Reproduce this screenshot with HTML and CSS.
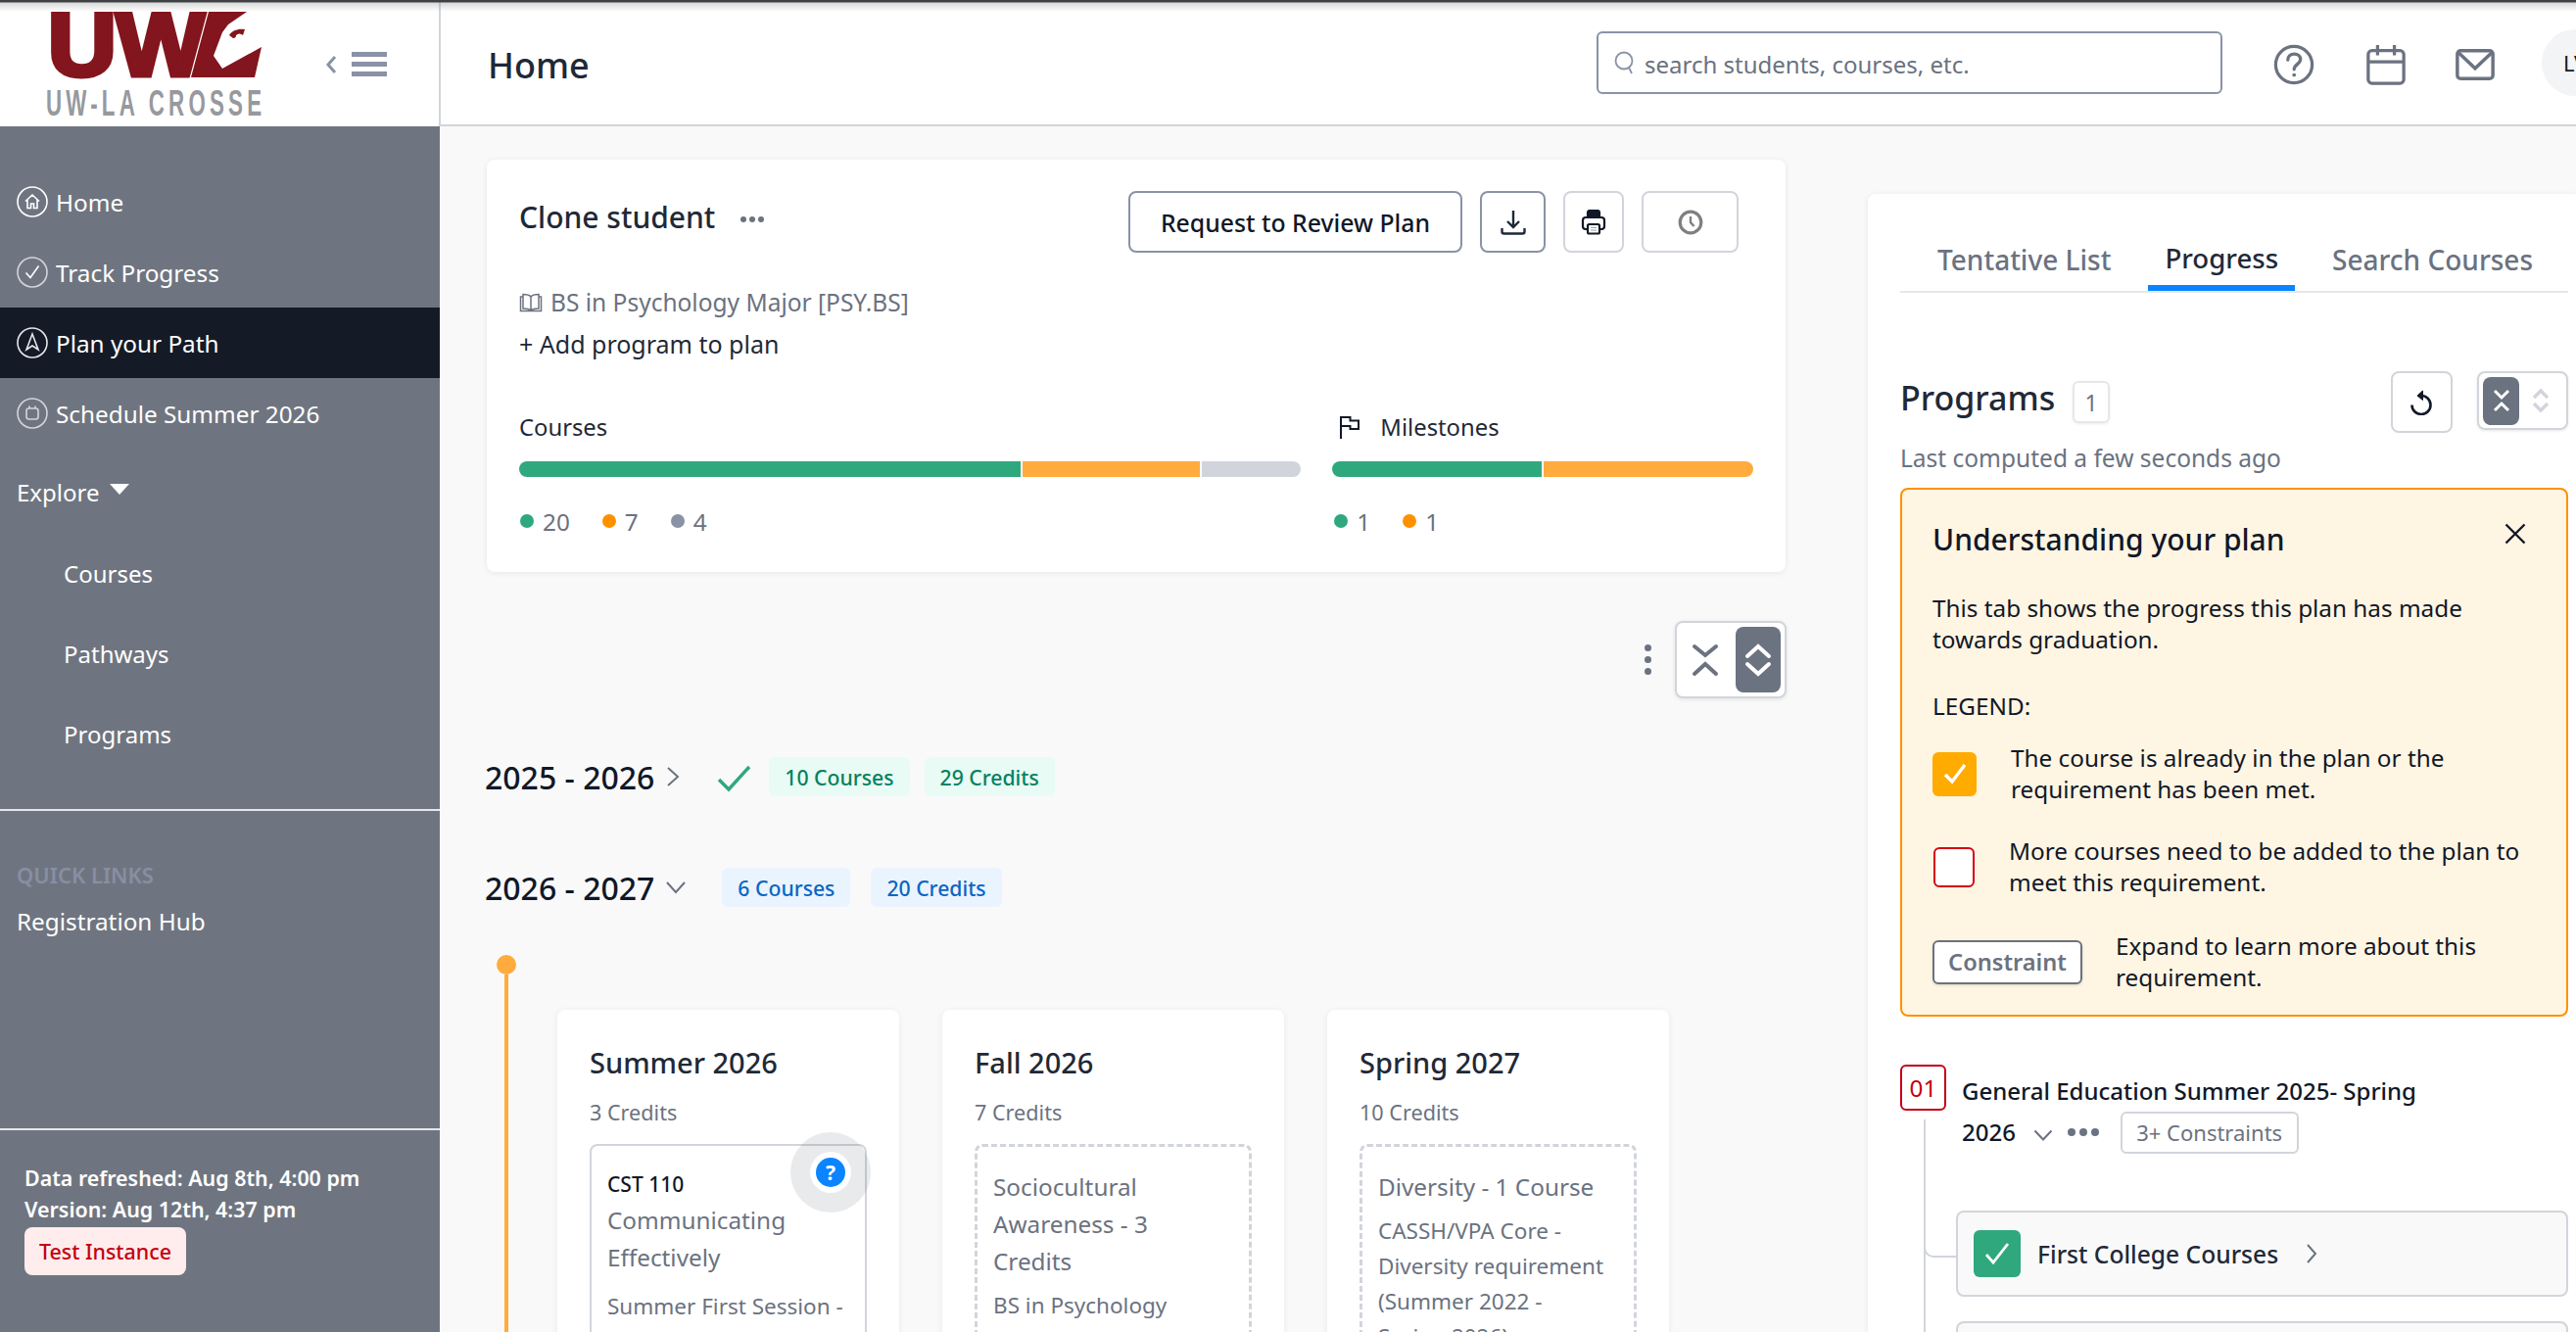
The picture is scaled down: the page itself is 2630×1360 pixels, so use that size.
FILE: index.html
```html
<!DOCTYPE html>
<html lang="en">
<head>
<meta charset="UTF-8">
<title>Home</title>
<link rel="stylesheet" href="styles.css">
</head>
<body>
  <div class="topline"></div>
  <div class="app">
    <div class="brand">
      <svg class="logo" viewBox="0 0 224 112" width="224" height="112">
        <text class="logo-uw" x="2" y="66" textLength="161" lengthAdjust="spacingAndGlyphs">UW</text>
        <polygon class="logo-red" points="166,1 205,1 186,14 180,22 171,46 180,59 220,37 213,68 148,68"/>
        <path class="logo-eye" d="M187 25c3-5 9-7 16-6l-2 6c-3-2-5-2-7 0 0 2-1 3-3 3z"/>
        <text class="logo-sub" x="0" y="107" transform="scale(0.62 1)" textLength="355" lengthAdjust="spacing">UW-LA CROSSE</text>
      </svg>
      <div class="burger">
        <svg width="12" height="18" viewBox="0 0 12 18"><path d="M10 1 3 9l7 8" fill="none" stroke="#8a92a6" stroke-width="3"/></svg>
        <div class="burger-lines"><span></span><span></span><span></span></div>
      </div>
    </div>

    <header class="topbar">
      <h1>Home</h1>
      <div class="search">
        <svg width="22" height="26" viewBox="0 0 22 26" fill="none" stroke="#8a92a6" stroke-width="1.800"><circle cx="10" cy="11" r="8.500"/><path d="m15 18 3 6"/></svg>
        <span>search students, courses, etc.</span>
      </div>
      <svg class="top-icon icon-help" viewBox="0 0 44 44" fill="none" stroke="#6b7280" stroke-width="3.400"><circle cx="22" cy="22" r="19.500"/><path d="M15.500 17c0-4 3-6.500 6.800-6.500s6.700 2.400 6.700 5.800c0 5.200-6.800 5.400-6.800 10.700" stroke-linecap="round"/><circle cx="22.200" cy="33" r="1.200" fill="#6b7280" stroke-width="1.500"/></svg>
      <svg class="top-icon icon-cal" viewBox="0 0 44 44" fill="none" stroke="#6b7280" stroke-width="3.400"><rect x="3" y="7" width="38" height="35" rx="4"/><path d="M3 19h38M13 1v11M31 1v11"/></svg>
      <svg class="top-icon icon-mail" viewBox="0 0 44 44" fill="none" stroke="#6b7280" stroke-width="3.600"><rect x="3" y="7" width="38" height="30" rx="3.500"/><path d="m4 9 18 17L40 9"/></svg>
      <div class="avatar">LV</div>
    </header>

    <aside class="sidebar">
      <nav class="main-nav">
        <a class="nav-row" href="#"><svg viewBox="0 0 32 32" fill="none" stroke="#fff" stroke-width="1.600"><circle cx="16" cy="16" r="15"/><path d="m9 15.500 7-6.500 7 6.500M11 14v8.500h3.500V18h3v4.500H21V14"/></svg>Home</a>
        <a class="nav-row" href="#"><svg viewBox="0 0 32 32" fill="none" stroke="#d1d5db" stroke-width="1.600"><circle cx="16" cy="16" r="15"/><path d="m9.500 16.500 4.500 5 8.500-12" stroke="#fff"/></svg>Track Progress</a>
        <a class="nav-row active" href="#"><svg viewBox="0 0 32 32" fill="none" stroke="#e5e7eb" stroke-width="1.600"><circle cx="16" cy="16" r="15"/><path d="m16 7 6 16-6-4-6 4z"/></svg>Plan your Path</a>
        <a class="nav-row" href="#"><svg viewBox="0 0 32 32" fill="none" stroke="#d1d5db" stroke-width="1.600"><circle cx="16" cy="16" r="15"/><rect x="10" y="11" width="12" height="11" rx="2.500"/><path d="M13 8.500V11M19 8.500V11"/></svg>Schedule Summer 2026</a>
      </nav>
      <div class="explore">Explore<span class="caret"></span></div>
      <a class="sub-row" href="#">Courses</a>
      <a class="sub-row" href="#">Pathways</a>
      <a class="sub-row" href="#">Programs</a>
      <div class="side-links">
        <div class="quick-title">QUICK LINKS</div>
        <a class="quick-link" href="#">Registration Hub</a>
      </div>
      <div class="side-foot">
        <p>Data refreshed: Aug 8th, 4:00 pm</p>
        <p>Version: Aug 12th, 4:37 pm</p>
        <span class="test-tag">Test Instance</span>
      </div>
    </aside>

    <main class="content">
      <div class="left-col">
        <section class="plan-card">
          <div class="plan-head">
            <div class="plan-title">Clone student <span class="more"><i></i><i></i><i></i></span></div>
            <div class="plan-actions">
              <button class="btn btn-strong">Request to Review Plan</button>
              <button class="btn btn-strong btn-dl"><svg width="26" height="26" viewBox="0 0 26 26" fill="none" stroke="#1f2937" stroke-width="2.400"><path d="M13 1v17M7 12l6 6 6-6M1.500 19v3.500a2 2 0 0 0 2 2h19a2 2 0 0 0 2-2V19"/></svg></button>
              <button class="btn btn-print"><svg width="26" height="26" viewBox="0 0 26 26" fill="none" stroke="#111827" stroke-width="2.200"><path d="M7 8V3a2 2 0 0 1 2-2h8a2 2 0 0 1 2 2v5z" fill="#111827"/><rect x="2" y="8" width="22" height="12" rx="3"/><rect x="7" y="15" width="12" height="9.500" rx="1.500" fill="#fff"/><path d="M10 18.500h6M10 21h6" stroke="#9ca3af" stroke-width="1.100"/></svg></button>
              <button class="btn btn-clock"><svg width="26" height="26" viewBox="0 0 26 26" fill="none" stroke="#7f7f7f" stroke-width="3.200"><circle cx="13" cy="13" r="10.800"/><path d="M13 7v6l3.500 4" stroke-width="2.400"/></svg></button>
            </div>
          </div>
          <div class="plan-program"><svg width="24" height="20" viewBox="0 0 24 20" fill="none" stroke="#6b7280" stroke-width="1.500"><path d="M12 4c-1.500-2-4-2.500-8-2.500V16c4 0 6.500.5 8 2 1.500-1.500 4-2 8-2V1.500c-4 0-6.500.5-8 2.500zm0 0v14M4 4H1.500v14.500H12h10.500V4H20"/></svg>BS in Psychology Major [PSY.BS]</div>
          <div class="plan-add">+ Add program to plan</div>
          <div class="plan-stats">
            <div class="stat stat-courses">
              <div class="stat-label">Courses</div>
              <div class="bar">
                <span class="seg seg-green bar-c1"></span><span class="seg seg-orange bar-c2"></span><span class="seg seg-grey bar-c3"></span>
              </div>
              <div class="legend">
                <span class="legend-item"><i class="dot dot-green"></i>20</span>
                <span class="legend-item"><i class="dot dot-orange"></i>7</span>
                <span class="legend-item"><i class="dot dot-grey"></i>4</span>
              </div>
            </div>
            <div class="stat stat-miles">
              <div class="stat-label"><svg width="22" height="24" viewBox="0 0 22 24" fill="none" stroke="#111827" stroke-width="2"><path d="M2 24V2h9.500v3.500H20V14h-8.500v-3H2"/></svg>Milestones</div>
              <div class="bar">
                <span class="seg seg-green bar-m1"></span><span class="seg seg-orange bar-m2"></span>
              </div>
              <div class="legend">
                <span class="legend-item"><i class="dot dot-green"></i>1</span>
                <span class="legend-item"><i class="dot dot-orange"></i>1</span>
              </div>
            </div>
          </div>
        </section>

        <div class="view-row">
          <span class="kebab"><i></i><i></i><i></i></span>
          <div class="view-toggle">
            <span class="vt-cell vt-off"><svg width="30" height="38" viewBox="0 0 30 38" fill="none" stroke="#6b7280" stroke-width="4" stroke-linecap="round"><path d="m4 5 11 9 11-9M4 33l11-10 11 10"/></svg></span>
            <span class="vt-cell vt-on"><svg width="30" height="38" viewBox="0 0 30 38" fill="none" stroke="#fff" stroke-width="4" stroke-linecap="round"><path d="m4 15 11-10 11 10M4 23l11 10 11-10"/></svg></span>
          </div>
        </div>

        <div class="year-row">
          <span class="year-name">2025 - 2026</span>
          <svg class="year-chev" width="14" height="24" viewBox="0 0 14 24" fill="none" stroke="#6b7280" stroke-width="2"><path d="m2 3 10 9-10 9"/></svg>
          <svg class="year-check" width="36" height="28" viewBox="0 0 36 28" fill="none" stroke="#2fa87e" stroke-width="3.400"><path d="m2 15 10 10L33 2"/></svg>
          <span class="pill pill-green">10 Courses</span>
          <span class="pill pill-green">29 Credits</span>
        </div>

        <div class="year-row year-open">
          <span class="year-name">2026 - 2027</span>
          <svg class="year-chev" width="22" height="14" viewBox="0 0 22 14" fill="none" stroke="#6b7280" stroke-width="2"><path d="m2 2 9 10 9-10"/></svg>
          <span class="pill pill-blue">6 Courses</span>
          <span class="pill pill-blue">20 Credits</span>
        </div>

        <div class="timeline">
          <div class="time-rail"><span class="time-dot"></span><span class="time-line"></span></div>
          <div class="terms">
            <article class="term">
              <h3>Summer 2026</h3>
              <div class="term-credits">3 Credits</div>
              <div class="course course-filled">
                <span class="course-alert"><b>?</b></span>
                <div class="course-code">CST 110</div>
                <div class="course-name">Communicating Effectively</div>
                <div class="course-note">Summer First Session - 2026</div>
              </div>
            </article>
            <article class="term">
              <h3>Fall 2026</h3>
              <div class="term-credits">7 Credits</div>
              <div class="course course-empty">
                <div class="course-name">Sociocultural<br>Awareness - 3<br>Credits</div>
                <div class="course-note">BS in Psychology<br>Major [PSY.BS]</div>
              </div>
            </article>
            <article class="term">
              <h3>Spring 2027</h3>
              <div class="term-credits">10 Credits</div>
              <div class="course course-empty">
                <div class="course-name">Diversity - 1 Course</div>
                <div class="course-note">CASSH/VPA Core -<br>Diversity requirement<br>(Summer 2022 -<br>Spring 2026)</div>
              </div>
            </article>
          </div>
        </div>
      </div>

      <section class="right-panel">
        <div class="tabs">
          <span class="tab">Tentative List</span>
          <span class="tab tab-on">Progress</span>
          <span class="tab">Search Courses</span>
        </div>
        <div class="programs-head">
          <h2>Programs</h2>
          <span class="count">1</span>
          <button class="btn btn-undo"><svg width="24" height="26" viewBox="0 0 24 26" fill="none" stroke="#111827" stroke-width="2.600"><path d="M11 6a9.500 9.500 0 1 1-9.500 9.500"/><path d="M12.500 1 7 6l5.500 4.500z" fill="#111827" stroke-width="1"/></svg></button>
          <div class="mini-toggle">
            <span class="mt-on"><svg width="20" height="26" viewBox="0 0 20 26" fill="none" stroke="#fff" stroke-width="3"><path d="m3 3 7 7 7-7M3 23l7-7 7 7"/></svg></span>
            <span class="mt-off"><svg width="20" height="26" viewBox="0 0 20 26" fill="none" stroke="#d1d5db" stroke-width="3.400"><path d="m3 10 7-7 7 7M3 16l7 7 7-7"/></svg></span>
          </div>
        </div>
        <div class="computed">Last computed a few seconds ago</div>

        <div class="callout">
          <div class="callout-head">
            <h4>Understanding your plan</h4>
            <svg class="callout-x" width="22" height="22" viewBox="0 0 22 22" fill="none" stroke="#111827" stroke-width="2.400"><path d="m1.500 1.500 19 19M20.500 1.500l-19 19"/></svg>
          </div>
          <p class="callout-text">This tab shows the progress this plan has made<br>towards graduation.</p>
          <p class="callout-legend">LEGEND:</p>
          <div class="legend-row legend-met">
            <span class="box box-met"><svg width="24" height="22" viewBox="0 0 24 22" fill="none" stroke="#fff" stroke-width="3.400"><path d="m2 12 7 7L22 2"/></svg></span>
            <p>The course is already in the plan or the<br>requirement has been met.</p>
          </div>
          <div class="legend-row legend-more">
            <span class="box box-more"></span>
            <p>More courses need to be added to the plan to<br>meet this requirement.</p>
          </div>
          <div class="legend-row legend-cons">
            <span class="cons-tag">Constraint</span>
            <p>Expand to learn more about this<br>requirement.</p>
          </div>
        </div>

        <div class="req">
          <div class="req-head">
            <span class="req-num">01</span>
            <div class="req-title">General Education Summer 2025- Spring<br>2026
              <svg class="req-chev" width="20" height="12" viewBox="0 0 20 12" fill="none" stroke="#6b7280" stroke-width="2"><path d="m1.500 1.500 8.500 9 8.500-9"/></svg>
              <span class="req-dots"><i></i><i></i><i></i></span>
              <span class="req-pill">3+ Constraints</span>
            </div>
          </div>
          <div class="req-tree">
            <div class="req-item">
              <span class="req-check"><svg width="26" height="24" viewBox="0 0 26 24" fill="none" stroke="#fff" stroke-width="2.800"><path d="m2 13 7 8L24 2"/></svg></span>
              <span>First College Courses</span>
              <svg class="req-next" width="12" height="22" viewBox="0 0 12 22" fill="none" stroke="#6b7280" stroke-width="2"><path d="m2 2 8 9-8 9"/></svg>
            </div>
            <div class="req-item"></div>
          </div>
        </div>
      </section>
    </main>
  </div>
</body>
</html>
```
FILE: styles.css
```css
* {
  box-sizing: border-box;
}
html, body {
  margin: 0;
  height: 1360px;
  overflow: hidden;
}
body {
  position: relative;
  font-family: "Noto Sans", "Open Sans", sans-serif;
  font-size: 24.3px;
  color: #111827;
  background-color: #f9f9fa;
}
p, h1, h2, h3, h4 {
  margin: 0;
}
a {
  color: inherit;
  text-decoration: none;
}
button {
  font-family: inherit;
}
.topline {
  position: absolute;
  left: 0;
  right: 0;
  top: 0;
  height: 12px;
  z-index: 5;
  pointer-events: none;
  background: linear-gradient(#3f4144 0, #3f4144 2px, rgba(120,120,120,0.28) 3px, rgba(255,255,255,0) 12px);
}
.app {
  display: grid;
  grid-template-columns: 450px 1fr;
  grid-template-rows: 129px 1231px;
  width: 2630px;
  height: 1360px;
}

/* brand + header */
.brand {
  display: flex;
  align-items: flex-start;
  background-color: #fff;
  padding: 11px 0 0 47px;
  border-right: 2px solid #d1d5db;
}
.logo {
  display: block;
  flex: none;
  overflow: visible;
}
.logo-uw {
  font-family: "Liberation Sans", sans-serif;
  font-weight: 700;
  font-size: 90px;
  fill: #82151d;
  stroke: #82151d;
  stroke-width: 5px;
}
.logo-red {
  fill: #82151d;
  stroke: #fff;
  stroke-width: 2.5px;
  paint-order: stroke;
}
.logo-eye {
  fill: #82151d;
}
.logo-sub {
  font-family: "Liberation Sans", sans-serif;
  font-weight: 700;
  font-size: 36px;
  fill: #97999d;
}
.burger {
  display: flex;
  align-items: center;
  gap: 15px;
  margin: 42px 0 0 61px;
}
.burger-lines {
  display: flex;
  flex-direction: column;
  gap: 5px;
}
.burger-lines span {
  display: block;
  width: 36px;
  height: 5px;
  background-color: #8a92a6;
}
.topbar {
  display: flex;
  align-items: center;
  background-color: #fff;
  border-bottom: 2px solid #d1d5db;
  padding-left: 48px;
  overflow: hidden;
}
.topbar h1 {
  flex: none;
  width: 1132px;
  margin-top: 5px;
  font-size: 36px;
  font-weight: 500;
  color: #1f2937;
}
.search {
  flex: none;
  display: flex;
  align-items: center;
  gap: 9px;
  width: 639px;
  height: 64px;
  padding-left: 16px;
  border: 2px solid #8a92a6;
  border-radius: 6px;
  font-size: 24px;
  color: #6b7280;
  margin-right: 52px;
}
.search span {
  margin-top: 3px;
}
.top-icon {
  flex: none;
  width: 42px;
  height: 42px;
  margin-top: 5px;
}
.icon-help {
  margin-right: 52px;
}
.icon-cal {
  margin-right: 49px;
}
.icon-mail {
  margin-right: 47px;
}
.avatar {
  flex: none;
  width: 68px;
  height: 68px;
  border-radius: 50%;
  padding-left: 22px;
  line-height: 68px;
  background-color: #f3f4f6;
  font-size: 22px;
}

/* sidebar */
.sidebar {
  display: flex;
  flex-direction: column;
  background-color: #6f7580;
  color: #fff;
  padding-top: 41px;
  width: 449px;
}
.nav-row {
  display: flex;
  align-items: center;
  gap: 8px;
  height: 72px;
  padding-left: 17px;
}
.nav-row svg {
  width: 32px;
  height: 32px;
  flex: none;
}
.nav-row.active {
  background-color: #141b27;
}
.explore {
  display: flex;
  align-items: center;
  gap: 11px;
  height: 82px;
  padding: 0 0 2px 17px;
  margin-top: 4px;
  font-size: 24px;
}
.caret {
  width: 0;
  height: 0;
  margin-top: -6px;
  border-left: 10px solid transparent;
  border-right: 10px solid transparent;
  border-top: 11px solid #fff;
}
.sub-row {
  display: flex;
  align-items: center;
  height: 82px;
  padding-left: 65px;
  font-size: 24px;
}
.side-links {
  margin-top: 36px;
  height: 328px;
  border-top: 2px solid #e5e7eb;
  border-bottom: 2px solid #e5e7eb;
  padding: 49px 17px 0;
}
.quick-title {
  font-size: 22px;
  font-weight: 600;
  line-height: 32px;
  color: #878fa3;
}
.quick-link {
  display: block;
  margin-top: 15px;
  line-height: 34px;
}
.side-foot {
  padding: 33px 0 0 25px;
  font-size: 21.4px;
  font-weight: 600;
  line-height: 32px;
}
.test-tag {
  display: inline-block;
  margin-top: 2px;
  height: 49px;
  line-height: 49px;
  padding: 0 15px;
  border-radius: 8px;
  color: #c40010;
  background-color: #ffecec;
  font-weight: 500;
}

/* main */
.content {
  display: flex;
  gap: 84px;
  padding-left: 47px;
  overflow: hidden;
}
.left-col {
  flex: none;
  width: 1326px;
  padding-top: 34px;
}
.plan-card {
  background-color: #fff;
  border-radius: 8px;
  height: 421px;
  padding: 32px 33px 0;
  box-shadow: 0 1px 6px rgba(0,0,0,0.08);
}
.plan-head {
  display: flex;
  justify-content: space-between;
  align-items: flex-start;
}
.plan-title {
  display: flex;
  align-items: center;
  font-size: 30px;
  font-weight: 500;
  line-height: 54px;
  color: #1f2937;
}
.more {
  display: inline-flex;
  gap: 3px;
  margin: 3px 0 0 26px;
}
.more i {
  width: 6px;
  height: 6px;
  border-radius: 50%;
  background-color: #6b7280;
}
.plan-actions {
  display: flex;
  gap: 18px;
  margin-right: 15px;
}
.btn {
  flex: none;
  height: 63px;
  display: flex;
  align-items: center;
  justify-content: center;
  background-color: #fff;
  border: 2px solid #d1d5db;
  border-radius: 8px;
  padding: 0;
}
.btn-strong {
  border-color: #8a92a6;
  font-size: 24.8px;
  font-weight: 500;
  color: #111827;
  padding: 0 31px;
}
.btn-dl {
  width: 67px;
  padding: 0;
}
.btn-print {
  width: 62px;
}
.btn-clock {
  width: 99px;
}
.plan-program {
  display: flex;
  align-items: center;
  gap: 8px;
  margin-top: 29px;
  font-size: 24.5px;
  line-height: 43px;
  color: #6b7280;
}
.plan-add {
  line-height: 43px;
  font-size: 25px;
  color: #1f2937;
}
.plan-stats {
  display: flex;
  gap: 32px;
  margin-top: 47px;
}
.stat-courses {
  width: 799px;
}
.stat-miles {
  width: 430px;
}
.stat-label {
  display: flex;
  align-items: center;
  gap: 20px;
  height: 32px;
  font-size: 23.8px;
  color: #1f2937;
}
.stat-miles .stat-label {
  padding-left: 7px;
}
.bar {
  display: flex;
  gap: 2px;
  height: 16px;
  margin-top: 19px;
  border-radius: 8px;
  overflow: hidden;
}
.seg-green {
  background-color: #2fa87e;
}
.seg-orange {
  background-color: #ffab3d;
}
.seg-grey {
  background-color: #d1d5db;
}
.bar-c1 {
  width: 512px;
}
.bar-c2 {
  width: 181px;
}
.bar-c3 {
  flex: 1;
}
.bar-m1 {
  width: 214px;
}
.bar-m2 {
  flex: 1;
}
.legend {
  display: flex;
  margin-top: 29px;
  height: 32px;
  padding-left: 1px;
  color: #6b7280;
  gap: 33px;
}
.legend-item {
  display: flex;
  align-items: center;
  gap: 9px;
}
.stat-miles .legend {
  padding-left: 2px;
}
.dot {
  width: 14px;
  height: 14px;
  border-radius: 50%;
}
.dot-green {
  background-color: #2fa87e;
}
.dot-orange {
  background-color: #ff9100;
}
.dot-grey {
  background-color: #8a92a6;
}
.view-row {
  display: flex;
  justify-content: flex-end;
  align-items: center;
  gap: 24px;
  margin: 50px -1px 0 0;
  height: 79px;
}
.kebab {
  display: flex;
  flex-direction: column;
  gap: 5px;
}
.kebab i {
  display: block;
  width: 7px;
  height: 7px;
  border-radius: 50%;
  background-color: #6b7280;
}
.view-toggle {
  display: flex;
  align-items: center;
  width: 114px;
  height: 79px;
  padding: 4px;
  background-color: #fff;
  border: 2px solid #d1d5db;
  border-radius: 8px;
  box-shadow: 0 1px 4px rgba(0,0,0,0.1);
}
.vt-cell {
  flex: 1;
  height: 100%;
  display: flex;
  align-items: center;
  justify-content: center;
  border-radius: 8px;
}
.vt-off {
  padding-right: 6px;
}
.vt-on {
  flex: none;
  width: 46px;
  background-color: #6b7280;
}
.year-row {
  display: flex;
  align-items: center;
  height: 40px;
  margin-top: 60px;
}
.year-open {
  margin-top: 73px;
}
.year-name {
  flex: none;
  margin-left: -2px;
  font-size: 32px;
  font-weight: 500;
  white-space: nowrap;
}
.year-chev {
  margin-left: 12px;
}
.year-check {
  margin: 4px 17px 0 38px;
}
.pill {
  height: 40px;
  line-height: 41px;
  padding: 0 16px;
  border-radius: 6px;
  font-size: 21.2px;
  font-weight: 500;
  margin-right: 15px;
}
.pill-green {
  color: #04825f;
  background-color: #e8fbf5;
}
.pill-blue {
  color: #0a66c2;
  background-color: #eaf4ff;
  margin-right: 21px;
}
.year-open .year-chev {
  margin: 0 36px 0 11px;
}
.timeline {
  display: flex;
  margin-top: 49px;
  height: 500px;
}
.time-rail {
  flex: none;
  width: 72px;
  display: flex;
  flex-direction: column;
  align-items: flex-start;
  padding-left: 10px;
}
.time-dot {
  width: 20px;
  height: 20px;
  border-radius: 50%;
  background-color: #ffab3d;
}
.time-line {
  flex: 1;
  width: 4px;
  margin-left: 8px;
  background-color: #ffab3d;
}
.terms {
  display: flex;
  gap: 44px;
  padding-top: 56px;
}
.term {
  width: 349px;
  height: 500px;
  padding: 30px 33px;
  background-color: #fff;
  border-radius: 8px;
  box-shadow: 0 1px 6px rgba(0,0,0,0.07);
}
.term h3 {
  font-size: 29px;
  font-weight: 500;
  line-height: 48px;
  color: #1f2937;
}
.term-credits {
  margin-top: 11px;
  font-size: 21.6px;
  line-height: 32px;
  color: #6b7280;
}
.course {
  position: relative;
  width: 283px;
  height: 300px;
  margin-top: 16px;
  padding: 21px 16px;
  border: 2px solid #d1d5db;
  border-radius: 8px;
}
.course-empty {
  border-style: dashed;
  border-width: 3px;
  padding: 22px 12px 0 16px;
}
.course-code {
  font-size: 21px;
  font-weight: 500;
  line-height: 36px;
}
.course-name {
  font-size: 24.3px;
  line-height: 38px;
  color: #6b7280;
}
.course-note {
  margin-top: 8px;
  font-size: 22.5px;
  line-height: 36px;
  color: #6b7280;
}
.course-filled .course-note {
  margin-top: 13px;
}
.course-alert {
  position: absolute;
  right: -6px;
  top: -14px;
  width: 82px;
  height: 82px;
  display: flex;
  align-items: center;
  justify-content: center;
  border-radius: 50%;
  background-color: rgba(107,114,128,0.15);
}
.course-alert b {
  width: 30px;
  height: 30px;
  line-height: 30px;
  text-align: center;
  border-radius: 50%;
  background-color: #0a84ff;
  color: #fff;
  font-size: 21px;
  box-shadow: 0 0 0 6px #fff;
}

/* right panel */
.right-panel {
  flex: 1;
  margin-top: 69px;
  padding: 0 8px 0 33px;
  background-color: #fff;
  border-radius: 8px 0 0 0;
  box-shadow: 0 1px 6px rgba(0,0,0,0.07);
}
.tabs {
  display: flex;
  align-items: flex-end;
  gap: 21px;
  height: 101px;
  padding-left: 21px;
  border-bottom: 2px solid #e5e7eb;
}
.tab {
  padding: 0 17px 13px;
  font-size: 28px;
  font-weight: 500;
  color: #6b7280;
  line-height: 38px;
}
.tab-on {
  color: #1f2937;
  font-size: 27.6px;
  padding-bottom: 9px;
  border-bottom: 6px solid #0a84ff;
}
.programs-head {
  display: flex;
  align-items: center;
  height: 63px;
  margin-top: 80px;
}
.programs-head h2 {
  margin-bottom: 9px;
  font-size: 34px;
  font-weight: 500;
  color: #1f2937;
}
.count {
  width: 38px;
  height: 43px;
  line-height: 40px;
  text-align: center;
  margin-left: 18px;
  color: #6b7280;
  border: 2px solid #e5e7eb;
  border-radius: 6px;
  box-shadow: 0 1px 3px rgba(0,0,0,0.08);
  font-size: 23px;
}
.btn-undo {
  width: 63px;
  margin-left: auto;
}
.mini-toggle {
  flex: none;
  display: flex;
  align-items: center;
  width: 93px;
  height: 60px;
  margin: -3px 0 0 25px;
  padding: 4px;
  border: 2px solid #d1d5db;
  border-radius: 8px;
  box-shadow: 0 1px 3px rgba(0,0,0,0.1);
}
.mt-on {
  width: 37px;
  height: 49px;
  display: flex;
  align-items: center;
  justify-content: center;
  border-radius: 8px;
  background-color: #6b7280;
}
.mt-off {
  flex: 1;
  display: flex;
  justify-content: center;
}
.computed {
  margin-top: 10px;
  font-size: 24.5px;
  line-height: 32px;
  color: #6b7280;
}
.callout {
  height: 540px;
  margin-top: 14px;
  padding: 31px 31px 0;
  background-color: #fff5e3;
  border: 2px solid #ff9100;
  border-radius: 8px;
}
.callout-head {
  display: flex;
  justify-content: space-between;
  align-items: flex-start;
  height: 40px;
}
.callout-head h4 {
  font-size: 30px;
  font-weight: 500;
  line-height: 40px;
}
.callout-x {
  margin: 3px 10px 0 0;
}
.callout-text {
  margin-top: 34px;
  line-height: 32px;
}
.callout-legend {
  margin-top: 36px;
  line-height: 32px;
}
.legend-row {
  display: flex;
  align-items: center;
  gap: 35px;
}
.legend-row p {
  line-height: 32px;
}
.legend-met {
  margin-top: 21px;
}
.legend-more {
  margin-top: 31px;
}
.legend-cons {
  margin-top: 33px;
  gap: 34px;
}
.box {
  flex: none;
  display: flex;
  align-items: center;
  justify-content: center;
  border-radius: 6px;
}
.box-met {
  width: 45px;
  height: 45px;
  background-color: #ffab00;
}
.box-more {
  width: 42px;
  height: 41px;
  margin-left: 1px;
  background-color: #fff;
  border: 2px solid #d60012;
}
.cons-tag {
  flex: none;
  width: 153px;
  height: 45px;
  line-height: 41px;
  text-align: center;
  font-size: 23.6px;
  color: #6b7280;
  font-weight: 600;
  background-color: #fff;
  border: 2px solid #6b7280;
  border-radius: 6px;
  box-shadow: 0 1px 3px rgba(0,0,0,0.15);
}
.req {
  position: relative;
  margin-top: 49px;
}
.req::before {
  content: "";
  position: absolute;
  left: 24px;
  top: 56px;
  bottom: -400px;
  width: 2px;
  background-color: #d1d5db;
}
.req-head {
  display: flex;
  gap: 16px;
}
.req-num {
  flex: none;
  width: 47px;
  height: 47px;
  line-height: 43px;
  text-align: center;
  color: #c40010;
  background-color: #fff;
  border: 2px solid #c40010;
  border-radius: 6px;
}
.req-title {
  margin-top: 6px;
  font-size: 24px;
  font-weight: 500;
  line-height: 42px;
}
.req-chev {
  margin-left: 12px;
}
.req-dots {
  display: inline-flex;
  gap: 4px;
  margin: 0 15px 0 9px;
  vertical-align: 5px;
}
.req-dots i {
  width: 8px;
  height: 8px;
  border-radius: 50%;
  background-color: #6b7280;
}
.req-pill {
  display: inline-block;
  width: 182px;
  height: 43px;
  line-height: 39px;
  text-align: center;
  font-size: 22px;
  font-weight: 400;
  color: #6b7280;
  border: 2px solid #d1d5db;
  border-radius: 6px;
  vertical-align: 0;
}
.req-tree {
  margin: 58px 0 0 57px;
}
.req-item {
  position: relative;
  display: flex;
  align-items: center;
  height: 88px;
  margin-bottom: 25px;
  padding-left: 16px;
  background-color: #f9f9fa;
  border: 2px solid #d1d5db;
  border-radius: 8px;
  font-size: 24.6px;
  font-weight: 500;
  color: #1f2937;
}
.req-item:first-child::before {
  content: "";
  position: absolute;
  left: -35px;
  top: 18px;
  width: 33px;
  height: 26px;
  border-left: 2px solid #d1d5db;
  border-bottom: 2px solid #d1d5db;
  border-radius: 0 0 0 10px;
}
.req-check {
  flex: none;
  display: flex;
  align-items: center;
  justify-content: center;
  width: 48px;
  height: 48px;
  margin-right: 17px;
  border-radius: 6px;
  background-color: #2fa87e;
}
.req-next {
  margin-left: 28px;
}
```
